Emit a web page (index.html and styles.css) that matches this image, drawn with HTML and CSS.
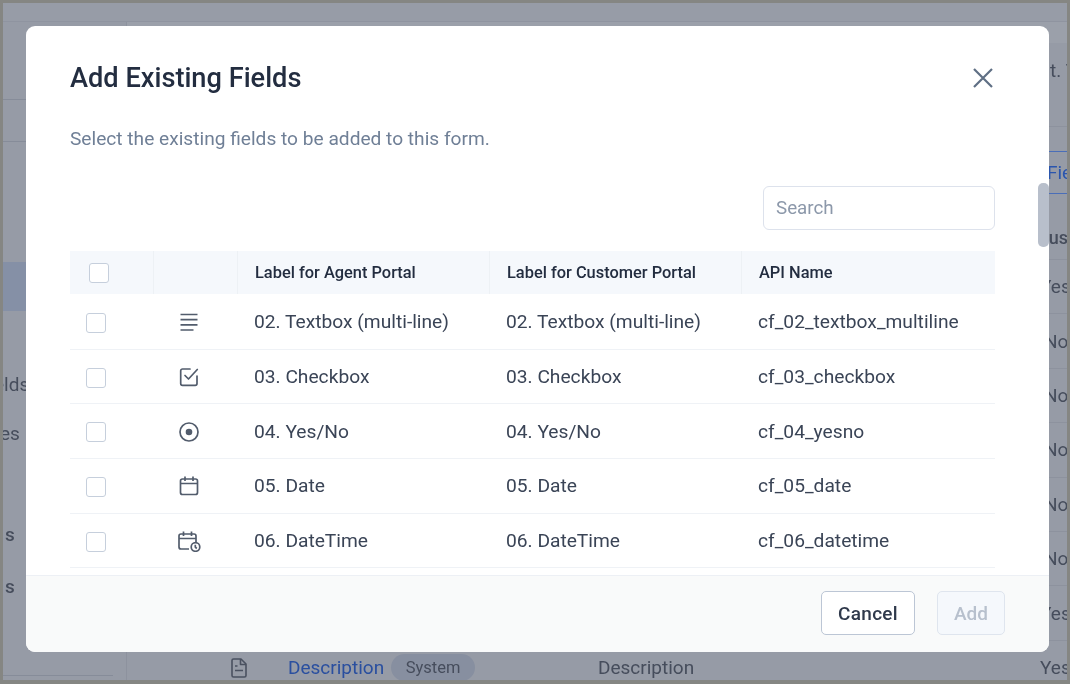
FILE: index.html
```html
<!DOCTYPE html>
<html lang="en">
<head>
<meta charset="utf-8">
<title>Add Existing Fields</title>
<link rel="stylesheet" href="styles.css">
</head>
<body>
<div class="frame">
  <div class="page">
    <div class="top-strip"></div>
    <div class="page-body">
      <aside class="side">
        <div class="side-head"></div>
        <div class="side-active"></div>
        <div class="side-item side-a">elds</div>
        <div class="side-item side-b">es</div>
        <div class="side-item side-c">s</div>
        <div class="side-item side-d">s</div>
        <div class="side-foot"></div>
      </aside>
      <main class="main">
        <div class="crumb">t. T</div>
        <div class="tab"><span>Fie</span></div>
        <div class="bg-head">us</div>
        <div class="bg-row"><span class="bg-val">Yes</span></div>
        <div class="bg-row"><span class="bg-val bg-no">No</span></div>
        <div class="bg-row"><span class="bg-val bg-no">No</span></div>
        <div class="bg-row"><span class="bg-val bg-no">No</span></div>
        <div class="bg-row"><span class="bg-val bg-no">No</span></div>
        <div class="bg-row"><span class="bg-val bg-no">No</span></div>
        <div class="bg-row"><span class="bg-val">Yes</span></div>
        <div class="bg-row bg-last">
          <svg class="bg-icon" viewBox="0 0 16 20" fill="none" stroke="#4a5160" stroke-width="1.600" stroke-linejoin="round"><path d="M2.500 1H10l5 5v11.500a1.500 1.500 0 0 1-1.500 1.500h-11A1.500 1.500 0 0 1 1 17.500v-15A1.500 1.500 0 0 1 2.500 1z"/><path d="M9.500 1v5.500H15M4 8h2.500M4 12.500h8"/></svg>
          <span class="bg-link">Description</span>
          <span class="bg-pill">System</span>
          <span class="bg-label">Description</span>
          <span class="bg-val">Yes</span>
        </div>
      </main>
    </div>
  </div>

  <section class="modal">
    <div class="modal-scroll">
      <header class="modal-head">
        <h1 class="title">Add Existing Fields</h1>
        <svg class="close" viewBox="0 0 20 20" fill="none" stroke="#5f6f84" stroke-width="2.200"><path d="M1 1l18 18M19 1L1 19"/></svg>
      </header>
      <p class="sub">Select the existing fields to be added to this form.</p>
      <div class="search-row"><input class="search" type="text" placeholder="Search"></div>
      <div class="table">
        <div class="row head">
          <div class="cell c-check"><span class="box box-head"></span></div>
          <div class="cell c-icon"></div>
          <div class="cell">Label for Agent Portal</div>
          <div class="cell">Label for Customer Portal</div>
          <div class="cell">API Name</div>
        </div>
        <div class="row">
          <div class="cell c-check"><span class="box"></span></div>
          <div class="cell c-icon"><svg class="icon" viewBox="0 0 20 20" fill="none" stroke="#525c6c" stroke-width="1.700"><path d="M1.500 2.500h17M1.500 7.700h17M1.500 12.900h17M1.500 18h13"/></svg></div>
          <div class="cell">02. Textbox (multi-line)</div>
          <div class="cell">02. Textbox (multi-line)</div>
          <div class="cell">cf_02_textbox_multiline</div>
        </div>
        <div class="row">
          <div class="cell c-check"><span class="box"></span></div>
          <div class="cell c-icon"><svg class="icon" viewBox="0 0 20 20" fill="none" stroke="#525c6c" stroke-width="1.700" stroke-linecap="round" stroke-linejoin="round"><path d="M11 2H3.500A1.800 1.800 0 0 0 1.700 3.800v12.700a1.800 1.800 0 0 0 1.800 1.800h12.700a1.800 1.800 0 0 0 1.800-1.800V9"/><path d="M6 8.500l3.500 3.500L18.300 2.500"/></svg></div>
          <div class="cell">03. Checkbox</div>
          <div class="cell">03. Checkbox</div>
          <div class="cell">cf_03_checkbox</div>
        </div>
        <div class="row">
          <div class="cell c-check"><span class="box"></span></div>
          <div class="cell c-icon"><svg class="icon" viewBox="0 0 20 20" fill="none" stroke="#525c6c" stroke-width="1.700"><circle cx="10" cy="10" r="9"/><circle cx="10" cy="10" r="3.300" fill="#525c6c" stroke="none"/></svg></div>
          <div class="cell">04. Yes/No</div>
          <div class="cell">04. Yes/No</div>
          <div class="cell">cf_04_yesno</div>
        </div>
        <div class="row">
          <div class="cell c-check"><span class="box"></span></div>
          <div class="cell c-icon"><svg class="icon" viewBox="0 0 20 20" fill="none" stroke="#525c6c" stroke-width="1.700" stroke-linejoin="round"><rect x="1.500" y="3" width="17" height="15.500" rx="2"/><path d="M1.500 7.500h17M6 .5v4.500M14 .5v4.500"/></svg></div>
          <div class="cell">05. Date</div>
          <div class="cell">05. Date</div>
          <div class="cell">cf_05_date</div>
        </div>
        <div class="row">
          <div class="cell c-check"><span class="box"></span></div>
          <div class="cell c-icon"><svg class="icon icon-wide" viewBox="0 0 23 21" fill="none" stroke="#525c6c" stroke-width="1.700" stroke-linejoin="round"><path d="M11 18H3a2 2 0 0 1-2-2V5a2 2 0 0 1 2-2h13a2 2 0 0 1 2 2v6"/><path d="M1 7.500h17M5.500 .5v4.500M13.500 .5v4.500"/><circle cx="17.500" cy="16" r="4.300"/><path d="M17.300 13.800v2.400l1.500 1.300"/></svg></div>
          <div class="cell">06. DateTime</div>
          <div class="cell">06. DateTime</div>
          <div class="cell">cf_06_datetime</div>
        </div>
      </div>
    </div>
    <div class="scrollbar"></div>
    <footer class="modal-foot">
      <button class="btn btn-cancel" type="button">Cancel</button>
      <button class="btn btn-add" type="button" disabled>Add</button>
    </footer>
  </section>
</div>
</body>
</html>
```
FILE: styles.css
```css
* { box-sizing: border-box; }
html, body { margin: 0; height: 100%; }
body { font-family: Roboto, "Liberation Sans", sans-serif; overflow: hidden; }

.frame {
  position: relative;
  width: 1070px;
  height: 684px;
  border: 3px solid #858683;
  border-bottom-width: 4px;
  background: #969ba6;
  overflow: hidden;
  filter: blur(.35px);
}

/* dimmed page behind the dialog */
.page { display: flex; flex-direction: column; height: 100%; color: #464d5c; font-size: 19px; }
.top-strip { height: 19px; flex: none; background: #979ca7; border-bottom: 1px solid #8f94a0; }
.page-body { flex: 1; display: flex; min-height: 0; }

.side { width: 124px; flex: none; border-right: 1px solid #8d929e; overflow: hidden; }
.side-head { height: 120px; border-bottom: 1px solid #868c99; background: linear-gradient(#969ba6 77px, #868c99 77px, #868c99 78px, #969ba6 78px); }
.side-active { height: 49px; margin-top: 120px; width: 24px; background: #8590a6; }
.side-item { height: 24px; line-height: 24px; white-space: nowrap; }
.side-a { margin-top: 62px; margin-left: -9px; }
.side-b { margin-top: 25px; margin-left: -3px; }
.side-c { margin-top: 77px; margin-left: 2px; font-weight: 500; }
.side-d { margin-top: 28px; margin-left: 2px; font-weight: 500; }
.side-foot { width: 110px; height: 1px; margin-top: 76px; background: #868c99; }

.main { flex: 1; min-width: 0; display: flex; flex-direction: column; }
.crumb { height: 105px; flex: none; padding-top: 37px; text-align: right; white-space: nowrap; border-bottom: 1px solid #8d929e; background: linear-gradient(#9ba0aa 21px, #969ba6 21px); line-height: 24px; margin-right: -10px; }
.tab { height: 43px; flex: none; margin-top: 24px; margin-left: 790px; color: #2a55ad; border-top: 1px solid #4a6eb8; border-bottom: 1px solid #4a6eb8; line-height: 41px; padding-left: 130px; white-space: nowrap; overflow: hidden; }
.bg-head { height: 66px; flex: none; text-align: right; padding-top: 32px; line-height: 24px; margin-right: -1px; font-weight: 500; font-size: 18px; border-bottom: 1px solid #8d929e; }
.bg-row { height: 54.400px; flex: none; display: flex; align-items: center; border-bottom: 1px solid #8d929e; padding-left: 104px; }
.bg-val { margin-left: auto; white-space: nowrap; width: 27px; }
.bg-no { padding-left: 4px; }
.bg-last { border-bottom: 0; }
.bg-icon { width: 16px; height: 20px; flex: none; }
.bg-link { margin-left: 41px; color: #2a4f9f; }
.bg-pill { margin-left: 7px; padding: 0 14.500px; height: 27px; line-height: 27px; border-radius: 14px; background: #878fa0; font-size: 16.500px; }
.bg-label { margin-left: 123px; }

/* dialog */
.modal {
  position: absolute;
  left: 23px;
  top: 23px;
  width: 1023px;
  height: 626px;
  background: #fff;
  border-radius: 9px;
  display: flex;
  flex-direction: column;
  overflow: hidden;
}
.modal-scroll { flex: 1; min-height: 0; overflow: hidden; padding: 0 54px 0 44px; }
.modal-head { display: flex; align-items: center; justify-content: space-between; height: 52px; margin-top: 26px; padding-right: 1px; }
.title { margin: 0; font-size: 27.200px; font-weight: 500; color: #232d40; }
.close { width: 20px; height: 20px; margin-right: 1px; }
.sub { margin: 21px 0 0; font-size: 19.150px; line-height: 28px; color: #6f7f96; }
.search-row { display: flex; justify-content: flex-end; margin-top: 33px; }
.search {
  width: 232px;
  height: 44px;
  border: 1.500px solid #dde2ec;
  border-radius: 6px;
  padding: 0 12px;
  font: 400 18.800px Roboto, "Liberation Sans", sans-serif;
  outline: none;
  background: #fff;
}
.search::placeholder { color: #8c98aa; opacity: 1; }

.table { margin-top: 21px; }
.row {
  display: grid;
  grid-template-columns: 83px 84px 252px 252px 254px;
  height: 54.700px;
  border-bottom: 1px solid #eff2f6;
  font-size: 19.200px;
  color: #3a4456;
}
.row .cell { display: flex; align-items: center; padding-left: 17px; white-space: nowrap; }
.row.head {
  height: 43px;
  margin-bottom: 1px;
  background: #f5f8fc;
  border-bottom: 0;
  font-size: 16.400px;
  font-weight: 500;
  color: #232d40;
}
.row.head .cell { padding-left: 17px; border-left: 1px solid #edf1f5; }
.row.head .cell:first-child { border-left: 0; }
.row .c-check { padding: 2px 0 0 16px; }
.row.head .c-check { padding: 0 0 0 19px; }
.row .c-icon { padding: 1px 12px 0 0; justify-content: center; }
.box { display: block; width: 20px; height: 20px; border: 1.500px solid #c6cfdc; border-radius: 3px; background: #fff; }
.icon { width: 20px; height: 20px; display: block; }
.icon-wide { width: 23px; height: 21px; }

.scrollbar {
  position: absolute;
  right: 0;
  top: 157px;
  width: 11px;
  height: 64px;
  border-radius: 5px;
  background: #b8bfcb;
}

.modal-foot {
  flex: none;
  height: 77px;
  background: #f9fafa;
  border-top: 1.500px solid #edf0f5;
  display: flex;
  justify-content: flex-end;
  align-items: center;
  gap: 22px;
  padding: 0 44px 3px 0;
}
.btn {
  height: 44px;
  border-radius: 5px;
  font: 500 19px Roboto, "Liberation Sans", sans-serif;
  padding: 2px 0 0;
}
.btn-cancel { width: 94px; background: #fff; border: 1.500px solid #bcc6d5; color: #2f394b; letter-spacing: .3px; }
.btn-add { width: 68px; background: #f5f8fc; border: 1.500px solid #dfe5ee; color: #b7c0cd; }
```
